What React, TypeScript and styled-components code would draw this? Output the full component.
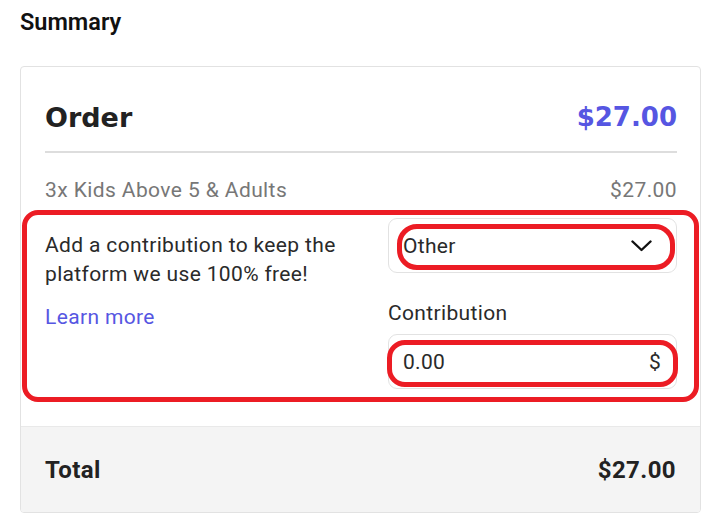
import React from "react"
import styled, { createGlobalStyle } from "styled-components"

const GlobalStyle = createGlobalStyle`
  body {
    margin: 0;
    background: #fff;
    font-family: Roboto, "Liberation Sans", sans-serif;
    color: #222;
  }
`

const colors = {
  primary: "#5656e2",
  border: "#e2e2e2",
  muted: "#777",
  text: "#2a2a2a",
  mark: "#ec1c24",
}

const Chevron = () => (
  <svg width="21" height="12" viewBox="0 0 21 12" fill="none">
    <polyline points="1.5,1.5 10.5,10 19.5,1.5" stroke="#111" strokeWidth="2.4" strokeLinecap="round" strokeLinejoin="round" />
  </svg>
)

const App = () => {
  return (
    <Page>
      <GlobalStyle />
      <Heading>Summary</Heading>
      <Card>
        <CardBody>
          <OrderRow>
            <OrderTitle>Order</OrderTitle>
            <OrderPrice>$27.00</OrderPrice>
          </OrderRow>
          <LineItem>
            <span>3x Kids Above 5 &amp; Adults</span>
            <span>$27.00</span>
          </LineItem>
          <Contribution>
            <Pitch>
              <p>Add a contribution to keep the platform we use 100% free!</p>
              <LearnMore href="#">Learn more</LearnMore>
            </Pitch>
            <Fields>
              <Field>
                <span>Other</span>
                <Chevron />
              </Field>
              <FieldLabel>Contribution</FieldLabel>
              <Field>
                <span>0.00</span>
                <span>$</span>
              </Field>
            </Fields>
          </Contribution>
        </CardBody>
        <CardFooter>
          <span>Total</span>
          <span>$27.00</span>
        </CardFooter>

        {/* hand-drawn highlight marks */}
        <Mark $left={1} $top={143} $width={677} $height={192} $radius={16} />
        <Mark $left={376} $top={157} $width={278} $height={46} $radius={20} />
        <Mark $left={366} $top={273} $width={291} $height={47} $radius={18} />
      </Card>
    </Page>
  )
}
export default App

const Page = styled.div`
  padding: 8px 24px 20px 20px;
`

const Heading = styled.h2`
  margin: 0 0 30px;
  font-size: 23.5px;
  line-height: 28px;
  font-weight: 600;
  color: #111;
`

const Card = styled.div`
  position: relative;
  border: 1px solid ${colors.border};
  border-radius: 4px;
  overflow: hidden;
  background: #fff;
`

const CardBody = styled.div`
  padding: 0 23px 37px 24px;
`

const OrderRow = styled.div`
  display: flex;
  justify-content: space-between;
  align-items: center;
  height: 86px;
  padding-top: 16px;
  border-bottom: 2px solid #ddd;
  box-sizing: border-box;
`

const OrderTitle = styled.h1`
  margin: 0;
  font-family: "DejaVu Sans", sans-serif;
  font-size: 27px;
  font-weight: 700;
  color: #222;
`

const OrderPrice = styled.span`
  font-family: "DejaVu Sans", sans-serif;
  font-size: 26px;
  font-weight: 700;
  color: ${colors.primary};
`

const LineItem = styled.div`
  display: flex;
  justify-content: space-between;
  margin-top: 25px;
  font-size: 21px;
  line-height: 24px;
  letter-spacing: 0.4px;
  color: ${colors.muted};
`

const Contribution = styled.div`
  display: grid;
  grid-template-columns: 1fr 289px;
  gap: 24px;
  margin-top: 16px;
`

const Pitch = styled.div`
  padding-top: 13px;
  font-size: 21px;
  line-height: 29px;
  letter-spacing: 0.35px;
  color: ${colors.text};

  p {
    margin: 0 0 14px;
  }
`

const LearnMore = styled.a`
  color: ${colors.primary};
  text-decoration: none;
`

const Fields = styled.div`
  display: flex;
  flex-direction: column;
`

const Field = styled.div`
  display: flex;
  justify-content: space-between;
  align-items: center;
  height: 55px;
  box-sizing: border-box;
  padding: 0 15px 0 14px;
  border: 1px solid ${colors.border};
  border-radius: 9px;
  font-size: 21px;
  letter-spacing: 0.3px;
  color: ${colors.text};

  svg {
    margin-right: 9px;
  }
`

const FieldLabel = styled.label`
  margin: 28px 0 9px;
  font-size: 21px;
  line-height: 24px;
  letter-spacing: 0.35px;
  color: ${colors.text};
`

const CardFooter = styled.div`
  display: flex;
  justify-content: space-between;
  align-items: center;
  height: 85px;
  padding: 0 24px;
  background: #f4f4f4;
  border-top: 1px solid #e9e9e9;
  font-size: 24px;
  font-weight: 700;
  letter-spacing: 0.4px;
  color: #222;
`

const Mark = styled.div<{ $left: number; $top: number; $width: number; $height: number; $radius: number }>`
  position: absolute;
  left: ${(p) => p.$left}px;
  top: ${(p) => p.$top}px;
  width: ${(p) => p.$width}px;
  height: ${(p) => p.$height}px;
  border: 5px solid ${colors.mark};
  border-radius: ${(p) => p.$radius}px;
  box-sizing: border-box;
  pointer-events: none;
`
